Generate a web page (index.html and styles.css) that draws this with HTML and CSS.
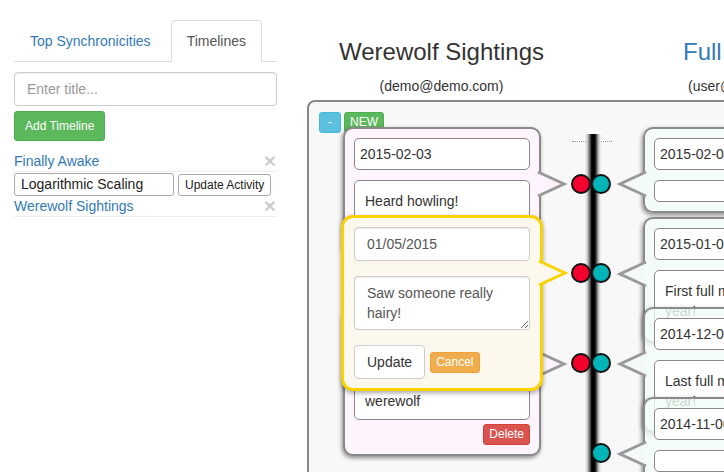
FILE: index.html
```html
<!DOCTYPE html>
<html>
<head>
<meta charset="utf-8">
<title>Timelines</title>
<link rel="stylesheet" href="styles.css">
</head>
<body>
<div class="page">
  <aside class="sidebar">
    <ul class="tabs">
      <li class="tab"><a class="tab-link">Top Synchronicities</a></li>
      <li class="tab active"><a class="tab-link">Timelines</a></li>
    </ul>
    <input class="title-input" type="text" placeholder="Enter title...">
    <button class="btn btn-sm btn-success add-btn">Add Timeline</button>
    <ul class="tl-list">
      <li class="tl-item"><a class="tl-link">Finally Awake</a><span class="close">×</span></li>
      <li class="tl-edit"><input class="edit-input" type="text" value="Logarithmic Scaling"><button class="update-activity">Update Activity</button></li>
      <li class="tl-item"><a class="tl-link">Werewolf Sightings</a><span class="close">×</span></li>
    </ul>
  </aside>

  <main class="main">
    <div class="headers">
      <div class="col-own">
        <h3 class="tl-title">Werewolf Sightings</h3>
        <div class="owner">(demo@demo.com)</div>
      </div>
      <div class="col-other">
        <h3 class="tl-title link">Full Moons</h3>
        <div class="owner">(user@demo.com)</div>
      </div>
    </div>

    <div class="board">
      <div class="toolbar">
        <button class="btn btn-xs btn-info btn-minus">-</button>
        <button class="btn btn-xs btn-success">NEW</button>
      </div>

      <div class="now-mark"></div>
      <div class="axis"></div>

      <div class="dot red" style="top:72px"></div>
      <div class="dot cyan" style="top:72px"></div>
      <div class="dot red" style="top:161px"></div>
      <div class="dot cyan" style="top:161px"></div>
      <div class="dot red" style="top:251px"></div>
      <div class="dot cyan" style="top:251px"></div>
      <div class="dot cyan" style="top:341px"></div>

      <!-- other user's timeline (right) -->
      <div class="card card-right" style="top:25px">
        <svg class="pointer pointer-left" viewBox="0 0 30 28"><polygon points="30,2 4,14 30,26" class="fill-mint"/><polyline points="30,2 4,14 30,26" class="stroke-gray"/></svg>
        <div class="field date-field">2015-02-03</div>
        <div class="field text-field"></div>
      </div>
      <div class="card card-right" style="top:115px">
        <svg class="pointer pointer-left" viewBox="0 0 30 28"><polygon points="30,2 4,14 30,26" class="fill-mint"/><polyline points="30,2 4,14 30,26" class="stroke-gray"/></svg>
        <div class="field date-field">2015-01-05</div>
        <div class="field text-field">First full moon of the year!</div>
      </div>
      <div class="card card-right" style="top:205px">
        <svg class="pointer pointer-left" viewBox="0 0 30 28"><polygon points="30,2 4,14 30,26" class="fill-mint"/><polyline points="30,2 4,14 30,26" class="stroke-gray"/></svg>
        <div class="field date-field">2014-12-06</div>
        <div class="field text-field">Last full moon of the year!</div>
      </div>
      <div class="card card-right" style="top:295px">
        <svg class="pointer pointer-left" viewBox="0 0 30 28"><polygon points="30,2 4,14 30,26" class="fill-mint"/><polyline points="30,2 4,14 30,26" class="stroke-gray"/></svg>
        <div class="field date-field">2014-11-06</div>
        <div class="field text-field"></div>
      </div>

      <!-- own timeline (left) -->
      <div class="card card-left" style="top:25px">
        <svg class="pointer pointer-right" viewBox="0 0 30 28"><polygon points="0,2 26,14 0,26" class="fill-pink"/><polyline points="0,2 26,14 0,26" class="stroke-gray"/></svg>
        <div class="field date-field">2015-02-03</div>
        <div class="field text-field">Heard howling!</div>
        <div class="card-actions"><button class="btn btn-xs btn-danger">Delete</button></div>
      </div>
      <div class="card card-left" style="top:205px">
        <svg class="pointer pointer-right" viewBox="0 0 30 28"><polygon points="0,2 26,14 0,26" class="fill-pink"/><polyline points="0,2 26,14 0,26" class="stroke-gray"/></svg>
        <div class="field date-field">2014-12-06</div>
        <div class="field text-field">Howled at by a<br>werewolf</div>
        <div class="card-actions"><button class="btn btn-xs btn-danger">Delete</button></div>
      </div>

      <div class="editor">
        <svg class="pointer pointer-right" viewBox="0 0 30 28"><polygon points="0,2 26,14 0,26" class="fill-cream"/><polyline points="0,2 26,14 0,26" class="stroke-gold"/></svg>
        <input class="form-input" type="text" value="01/05/2015">
        <textarea class="form-area" rows="2">Saw someone really hairy!</textarea>
        <div class="editor-actions">
          <button class="btn btn-default">Update</button>
          <button class="btn btn-xs btn-warning">Cancel</button>
        </div>
      </div>
    </div>
  </main>
</div>
</body>
</html>
```

FILE: styles.css
```css
* { box-sizing: border-box; }

html, body {
  margin: 0;
  padding: 0;
  width: 724px;
  height: 472px;
  overflow: hidden;
  background: #fff;
}

body {
  font-family: "Liberation Sans", Arial, sans-serif;
  font-size: 14px;
  line-height: 20px;
  color: #333;
}

.page {
  display: flex;
  align-items: flex-start;
}

/* ---------- sidebar ---------- */
.sidebar {
  flex: none;
  width: 263px;
  margin-left: 14px;
  padding-top: 20px;
}

.tabs {
  display: flex;
  list-style: none;
  margin: 0;
  padding: 0;
  border-bottom: 1px solid #ddd;
}

.tab { margin-bottom: -1px; }

.tab-link {
  display: block;
  margin-right: 4px;
  padding: 10px 15px;
  border: 1px solid transparent;
  border-radius: 4px 4px 0 0;
  color: #337ab7;
  text-decoration: none;
}

.tab.active .tab-link {
  color: #555;
  background: #fff;
  border-color: #ddd #ddd transparent;
}

.title-input {
  display: block;
  width: 100%;
  height: 34px;
  margin: 10px 0 0;
  padding: 6px 12px;
  border: 1px solid #ccc;
  border-radius: 4px;
  font: inherit;
  color: #555;
  box-shadow: inset 0 1px 1px rgba(0,0,0,.075);
}
.title-input::placeholder { color: #999; }

.btn {
  display: inline-block;
  margin: 0;
  font-family: inherit;
  border: 1px solid transparent;
  border-radius: 3px;
  text-align: center;
  white-space: nowrap;
}

.btn-sm { padding: 5px 10px; font-size: 12px; line-height: 18px; }
.btn-xs { padding: 1px 5px; font-size: 12px; line-height: 17px; }

.btn-success { background: #5cb85c; border-color: #4cae4c; color: #fff; }
.btn-info    { background: #5bc0de; border-color: #46b8da; color: #fff; }
.btn-danger  { background: #d9534f; border-color: #d43f3a; color: #fff; }
.btn-warning { background: #f0ad4e; border-color: #eea236; color: #fff; }
.btn-default {
  background: #fff;
  border-color: #ccc;
  color: #333;
  padding: 6px 12px;
  font-size: 14px;
  line-height: 20px;
  border-radius: 4px;
}

.add-btn { display: block; margin-top: 5px; }

.tl-list {
  list-style: none;
  margin: 10px 0 0;
  padding: 0;
}

.tl-item {
  display: flex;
  justify-content: space-between;
  align-items: center;
  height: 21px;
  border-bottom: 1px solid #eee;
}

.tl-link { color: #337ab7; text-decoration: none; }

.close {
  font-size: 21px;
  font-weight: bold;
  line-height: 20px;
  color: #000;
  opacity: .2;
  margin-right: 1px;
}

.tl-edit {
  display: flex;
  align-items: center;
  height: 24px;
}

.edit-input {
  width: 160px;
  height: 23px;
  margin: 0;
  padding: 0 6px;
  border: 1px solid #aaa;
  border-radius: 3px;
  font: 14px/20px "Liberation Sans", Arial, sans-serif;
  color: #222;
}

.update-activity {
  height: 22px;
  margin: 2px 0 0 4px;
  padding: 0 6px;
  border: 1px solid #aaa;
  border-radius: 3px;
  background: #fff;
  font: 12px/18px "Liberation Sans", Arial, sans-serif;
  color: #222;
}

/* ---------- main ---------- */
.main {
  flex: none;
  width: 620px;
  margin-left: 30px;
}

.headers {
  display: flex;
  padding-top: 39px;
}

.col-own { width: 269px; text-align: center; }
.col-other { flex: 1; white-space: nowrap; }

.tl-title {
  margin: 0;
  font-size: 24px;
  line-height: 26px;
  font-weight: normal;
  color: #333;
}
.tl-title.link { color: #337ab7; padding-left: 107px; }

.owner { margin-top: 11px; }
.col-other .owner { padding-left: 112px; }

.board {
  position: relative;
  height: 420px;
  margin-top: 4px;
  padding: 10px;
  border: 2px solid #888;
  border-radius: 8px;
  background: #f8f8f8;
}

.toolbar { display: flex; gap: 3px; }
.btn-minus { padding: 1px 8px; }

.now-mark {
  position: absolute;
  left: 263px;
  top: 39px;
  width: 40px;
  border-top: 1px dotted #999;
}

.axis {
  position: absolute;
  left: 276px;
  top: 32px;
  width: 16px;
  height: 400px;
  background: linear-gradient(to right,
    rgba(0,0,0,0) 0%, #c8c8c8 15%, #555 32%, #000 42%, #000 62%, #555 72%, #c8c8c8 86%, rgba(0,0,0,0) 100%);
}

.dot {
  position: absolute;
  width: 20px;
  height: 20px;
  border: 2px solid #111;
  border-radius: 50%;
}
.dot.red  { left: 262px; background: #f4002f; }
.dot.cyan { left: 282px; background: #00b4b8; }

/* ---------- cards ---------- */
.card {
  position: absolute;
  width: 198px;
  padding: 9px;
  border: 2px solid #8a8a8a;
  border-radius: 10px;
  box-shadow: -1px 2px 4px rgba(0,0,0,.45);
}

.card-left  { left: 34px;  background: #fdf4fd; }
.card-right { left: 334px; background: rgba(243,252,247,.8); }

.field {
  background: #fff;
  border: 1px solid #888;
  border-radius: 5px;
  color: #333;
}

.date-field {
  height: 32px;
  padding: 5px;
  white-space: nowrap;
  overflow: hidden;
}

.text-field {
  margin-top: 10px;
  padding: 10px 10px 8px;
}

.card-right .text-field { padding-bottom: 10px; }

.card-actions {
  display: flex;
  justify-content: flex-end;
  margin-top: 4px;
}

.pointer {
  position: absolute;
  top: 41px;
  width: 30px;
  height: 28px;
  overflow: visible;
}
.pointer-right { left: 100%; margin-left: -1px; }
.pointer-left  { right: 100%; margin-right: -1px; }

.fill-pink  { fill: #fdf4fd; }
.fill-mint  { fill: #f4fbf7; }
.fill-cream { fill: #fdf8ee; }
.stroke-gray { fill: none; stroke: #999; stroke-width: 3; }
.stroke-gold { fill: none; stroke: #f9d200; stroke-width: 3; }

/* ---------- editor ---------- */
.editor {
  position: absolute;
  left: 32px;
  top: 113px;
  width: 202px;
  padding: 9px 10px;
  border: 3px solid #f9d200;
  border-radius: 12px;
  background: #fdf8ee;
  box-shadow: 0 2px 5px rgba(0,0,0,.35);
}

.form-input,
.form-area {
  display: block;
  width: 100%;
  margin: 0;
  padding: 6px 12px;
  border: 1px solid #ccc;
  border-radius: 4px;
  background: #fff;
  font: 14px/20px "Liberation Sans", Arial, sans-serif;
  color: #555;
  box-shadow: inset 0 1px 1px rgba(0,0,0,.075);
}

.form-input { height: 34px; }

.form-area {
  height: 54px;
  margin-top: 15px;
  resize: vertical;
  overflow: hidden;
}

.editor-actions {
  display: flex;
  align-items: center;
  gap: 5px;
  margin-top: 15px;
}
```
